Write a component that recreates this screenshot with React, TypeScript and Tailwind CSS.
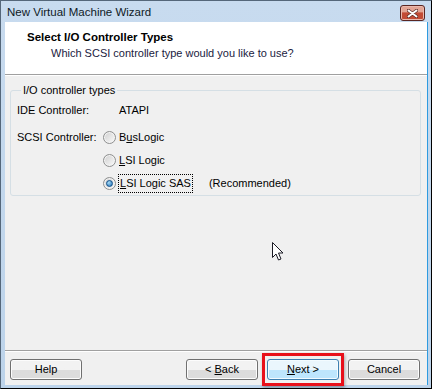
function Radio({ checked }: { checked?: boolean }) {
  return (
    <span className="w-[13px] h-[13px] rounded-full border border-[#8e8f8f] bg-linear-to-br from-[#cfcfcf] to-[#fbfbfb] flex items-center justify-center shrink-0 shadow-[inset_0_0_0_1px_#f4f4f4]">
      {checked && (
        <span className="w-[7px] h-[7px] rounded-full border border-[#0f4f8a] bg-radial-[at_35%_30%] from-[#a8dcf7] to-[#1f6fb4]" />
      )}
    </span>
  );
}

function Btn({ children, primary }: { children: React.ReactNode; primary?: boolean }) {
  return (
    <button
      className={
        primary
          ? 'w-[72px] h-[21px] rounded-[3px] border border-[#3c7fb1] bg-linear-to-b from-[#eaf6fd] from-50% to-[#bee6fd] to-50% shadow-[inset_0_0_0_1px_#f3fbff] text-[11px] leading-none text-black'
          : 'w-[72px] h-[21px] rounded-[3px] border border-[#707070] bg-linear-to-b from-[#f2f2f2] from-50% to-[#dcdcdc] to-50% shadow-[inset_0_0_0_1px_#fcfcfc] text-[11px] leading-none text-black'
      }
    >
      {children}
    </button>
  );
}

export default function App() {
  return (
    <div className="relative w-[432px] h-[389px] flex flex-col bg-linear-to-b from-[#c8dbef] to-[#bcd3ea] border border-[#55677a] border-r-black border-b-black font-['Liberation_Sans',sans-serif] text-[11px] text-black overflow-hidden whitespace-nowrap">
      {/* Title bar */}
      <div className="h-[21px] flex items-center justify-between pl-[6px] pr-[6px]">
        <span className="text-[11.5px] text-[#0f1a26] pt-[2px]">New Virtual Machine Wizard</span>
        <div className="w-[25px] h-[16px] mt-[3px] rounded-[3px] border border-[#5a2622] bg-linear-to-b from-[#e3a595] from-40% to-[#c24b35] to-50% flex items-center justify-center shadow-[inset_0_0_0_1px_#eab9ad]">
          <svg width="11" height="9" viewBox="0 0 11 9">
            <path d="M1.5 1.5 L9.5 7.5 M9.5 1.5 L1.5 7.5" stroke="#5a2a24" strokeWidth="3.4" strokeLinecap="round" />
            <path d="M1.5 1.5 L9.5 7.5 M9.5 1.5 L1.5 7.5" stroke="#ffffff" strokeWidth="2" strokeLinecap="round" />
          </svg>
        </div>
      </div>

      {/* Body */}
      <div className="flex-1 flex flex-col pl-[4px] pr-[3px] pb-[3px]">
        <div className="flex-1 flex flex-col bg-[#f0f0f0] border-r border-[#2e9be0]">
          {/* Header */}
          <div className="h-[53px] bg-white border-b border-[#a0a0a0] pt-[8px]">
            <div className="pl-[22px] font-bold text-[11.5px] leading-[14px]">Select I/O Controller Types</div>
            <div className="pl-[46px] mt-[2px] text-[11px] leading-[14px] text-[#1a1a40]">
              Which SCSI controller type would you like to use?
            </div>
          </div>
          <div className="h-px bg-white" />

          {/* Content */}
          <div className="flex-1 pt-[7px] pl-[5px] pr-[6px]">
            <fieldset className="border border-[#d5dfe5] rounded-[3px] pl-[6px] pb-0">
              <legend className="ml-[4px] px-[2px] leading-[14px]">I/O controller types</legend>
              <div className="mt-[6px] flex h-[14px] items-center">
                <span className="w-[86px]">IDE Controller:</span>
                <span className="pl-[16px]">ATAPI</span>
              </div>
              <div className="mt-[9px] flex">
                <span className="w-[86px] h-[23px] flex items-center">SCSI Controller:</span>
                <div className="flex flex-col">
                  <label className="h-[23px] flex items-center gap-[3px]">
                    <Radio />
                    <span>
                      B<span className="underline">u</span>sLogic
                    </span>
                  </label>
                  <label className="h-[23px] flex items-center gap-[3px]">
                    <Radio />
                    <span>
                      <span className="underline">L</span>SI Logic
                    </span>
                  </label>
                  <label className="h-[23px] flex items-center gap-[3px]">
                    <Radio checked />
                    <span className="outline-1 outline-dotted outline-black px-px">
                      <span className="underline">L</span>SI Logic SAS
                    </span>
                    <span className="ml-[14px]">(Recommended)</span>
                  </label>
                </div>
              </div>
            </fieldset>
          </div>

          {/* Footer */}
          <div className="h-px bg-[#a0a0a0]" />
          <div className="h-px bg-white" />
          <div className="h-[33px] flex items-start pt-[7px] pl-[5px] pr-[7px]">
            <Btn>Help</Btn>
            <div className="flex-1" />
            <div className="flex gap-[9px]">
              <Btn>
                &lt; <span className="underline">B</span>ack
              </Btn>
              <Btn primary>
                <span className="underline">N</span>ext &gt;
              </Btn>
              <Btn>Cancel</Btn>
            </div>
          </div>
        </div>
      </div>

      {/* Annotation box around Next */}
      <div className="absolute left-[261px] top-[352px] w-[82px] h-[33px] border-[3px] border-[#e8101a] shadow-[1px_2px_3px_rgba(0,0,0,0.3)]" />

      {/* Mouse pointer */}
      <svg className="absolute left-[270px] top-[240px]" width="14" height="21" viewBox="0 0 14 21">
        <path
          d="M1.5 1.5 L1.5 16.5 L5 13 L7.5 19 L10 18 L7.5 12 L12 12 Z"
          fill="#ffffff"
          stroke="#1a1a24"
          strokeWidth="1"
          strokeLinejoin="miter"
        />
      </svg>
    </div>
  );
}
